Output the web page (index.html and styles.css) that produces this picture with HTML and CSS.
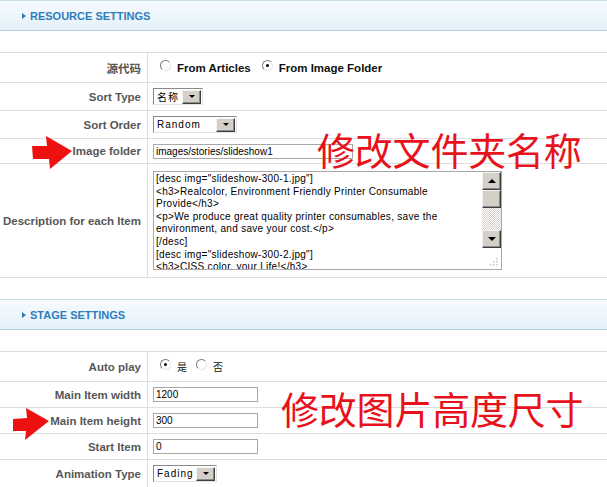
FILE: index.html
```html
<!DOCTYPE html>
<html lang="en">
<head>
<meta charset="utf-8">
<title>Settings</title>
<link rel="stylesheet" href="styles.css">
</head>
<body>
<div class="page">
  <div class="section-head"><span class="tri"></span>RESOURCE SETTINGS</div>
  <div class="form">
    <div class="row h30">
      <div class="label cjk">源代码</div>
      <div class="field">
        <span class="opt"><span class="radio"></span>From Articles</span>
        <span class="opt"><span class="radio on"></span>From Image Folder</span>
      </div>
    </div>
    <div class="row h28">
      <div class="label">Sort Type</div>
      <div class="field">
        <div class="select w50"><span class="sel-text cjk-s">名称</span><span class="sel-btn"></span></div>
      </div>
    </div>
    <div class="row h28">
      <div class="label">Sort Order</div>
      <div class="field">
        <div class="select w84"><span class="sel-text">Random</span><span class="sel-btn"></span></div>
      </div>
    </div>
    <div class="row h25">
      <div class="label">Image folder</div>
      <div class="field"><div class="inp w200">images/stories/slideshow1</div></div>
    </div>
    <div class="row h114">
      <div class="label">Description for each Item</div>
      <div class="field">
        <div class="textarea">
          <div class="ta-text">[desc img="slideshow-300-1.jpg"]
&lt;h3&gt;Realcolor, Environment Friendly Printer Consumable
Provide&lt;/h3&gt;
&lt;p&gt;We produce great quality printer consumables, save the
environment, and save your cost.&lt;/p&gt;
[/desc]
[desc img="slideshow-300-2.jpg"]
&lt;h3&gt;CISS color, your Life!&lt;/h3&gt;</div>
          <div class="scrollbar">
            <span class="sb-btn up"></span>
            <span class="sb-thumb"></span>
            <span class="sb-track"></span>
            <span class="sb-btn down"></span>
            <span class="sb-grip">
              <svg width="10" height="10" viewBox="0 0 10 10"><g fill="#c8c8c8"><rect x="7" y="1" width="1.5" height="1.5"/><rect x="4" y="4" width="1.5" height="1.5"/><rect x="7" y="4" width="1.5" height="1.5"/><rect x="1" y="7" width="1.5" height="1.5"/><rect x="4" y="7" width="1.5" height="1.5"/><rect x="7" y="7" width="1.5" height="1.5"/></g></svg>
            </span>
          </div>
        </div>
      </div>
    </div>
  </div>

  <div class="section-head"><span class="tri"></span>STAGE SETTINGS</div>
  <div class="form">
    <div class="row h30">
      <div class="label">Auto play</div>
      <div class="field">
        <span class="opt small"><span class="radio on"></span><span class="cjk-s">是</span></span>
        <span class="opt small"><span class="radio"></span><span class="cjk-s">否</span></span>
      </div>
    </div>
    <div class="row h26">
      <div class="label">Main Item width</div>
      <div class="field"><div class="inp w105">1200</div></div>
    </div>
    <div class="row h26">
      <div class="label">Main Item height</div>
      <div class="field"><div class="inp w105">300</div></div>
    </div>
    <div class="row h26">
      <div class="label">Start Item</div>
      <div class="field"><div class="inp w105">0</div></div>
    </div>
    <div class="row h28">
      <div class="label">Animation Type</div>
      <div class="field">
        <div class="select w64"><span class="sel-text">Fading</span><span class="sel-btn"></span></div>
      </div>
    </div>
  </div>

  <div class="note note-a">修改文件夹名称</div>
  <div class="note note-b">修改图片高度尺寸</div>
  <svg class="arrow arrow-a" width="80" height="40" viewBox="30 134 45 36"><polygon fill="#ee1111" points="32,146 47,146 46,136 72,151 50,169 49,159 33,159"/></svg>
  <svg class="arrow arrow-b" width="60" height="40" viewBox="10 406 42 36"><polygon fill="#ee1111" points="13,419 27,418 26,408 49,421 25,440 26,431 13,431"/></svg>
</div>
</body>
</html>
```

FILE: styles.css
```css
html, body {
  margin: 0;
  padding: 0;
  background: #ffffff;
}

.page {
  position: relative;
  width: 607px;
  height: 487px;
  overflow: hidden;
  font-family: "Liberation Sans", Arial, sans-serif;
}

.section-head {
  height: 29px;
  border-top: 1px solid #c9dde7;
  border-bottom: 1px solid #b3cfdd;
  background: linear-gradient(to bottom, #f7fbfe 0%, #eef7fc 45%, #e3f1f9 100%);
  display: flex;
  align-items: center;
  padding-left: 22px;
  font-size: 11px;
  font-weight: bold;
  color: #2f7cbd;
  margin-bottom: 21px;
}

.tri {
  width: 0;
  height: 0;
  border-left: 4px solid #2f7cbd;
  border-top: 3.5px solid transparent;
  border-bottom: 3.5px solid transparent;
  margin-right: 4px;
}

.form {
  border-top: 1px solid #dedede;
  margin-bottom: 21px;
}

.row {
  display: grid;
  grid-template-columns: 148px 1fr;
  border-bottom: 1px solid #dedede;
  box-sizing: border-box;
}

.h30 { height: 30px; }
.h28 { height: 28px; }
.h26 { height: 26px; }
.h25 { height: 25px; }
.h114 { height: 114px; }

.label {
  box-sizing: border-box;
  border-right: 1px solid #dedede;
  padding-right: 6px;
  display: flex;
  align-items: center;
  justify-content: flex-end;
  font-size: 11.5px;
  font-weight: bold;
  color: #575757;
  white-space: nowrap;
}

.label.cjk {
  font-family: "Noto Sans CJK SC", sans-serif;
  font-size: 11.5px;
  color: #555;
}

.cjk-s {
  font-family: "Noto Sans CJK SC", sans-serif;
}

.field {
  padding-left: 5px;
  display: flex;
  align-items: center;
}

.opt {
  display: flex;
  align-items: center;
  font-size: 11.5px;
  font-weight: bold;
  color: #111;
  margin-left: 7px;
  margin-right: 4px;
}

.opt.small {
  font-size: 10px;
  font-weight: normal;
  margin-right: 2px;
}

.radio {
  box-sizing: border-box;
  width: 11px;
  height: 11px;
  border-radius: 50%;
  border: 1px solid;
  border-color: #7a7a7a #e6e6e6 #e6e6e6 #7a7a7a;
  background: #fff;
  margin-right: 6px;
  margin-top: -4px;
  display: flex;
  align-items: center;
  justify-content: center;
}

.radio.on::after {
  content: "";
  width: 3px;
  height: 3px;
  border-radius: 50%;
  background: #000;
}

.select {
  box-sizing: border-box;
  height: 17px;
  border: 1px solid;
  border-color: #8a8a8a #e2e2e2 #e2e2e2 #8a8a8a;
  background: #fff;
  display: flex;
  align-items: center;
}

.w50 { width: 50px; }
.w84 { width: 84px; }
.w64 { width: 64px; }

.sel-text {
  flex: 1;
  padding-left: 3px;
  font-size: 10px;
  letter-spacing: 1px;
  color: #000;
  white-space: nowrap;
}

.sel-btn {
  box-sizing: border-box;
  width: 19px;
  height: 14px;
  margin-right: 1px;
  background: #d4d0c8;
  border: 1px solid;
  border-color: #f4f4f4 #404040 #404040 #f4f4f4;
  box-shadow: inset -1px -1px 0 #8a8a8a;
  display: flex;
  align-items: center;
  justify-content: center;
}

.sel-btn::before {
  content: "";
  border-top: 3px solid #000;
  border-left: 3px solid transparent;
  border-right: 3px solid transparent;
}

.inp {
  box-sizing: border-box;
  height: 15px;
  border: 1px solid #a8a8a8;
  background: #fff;
  font-size: 10px;
  line-height: 13px;
  padding-left: 2px;
  color: #000;
  white-space: nowrap;
  overflow: hidden;
}

.w105 { width: 105px; }
.w200 { width: 200px; }

.textarea {
  box-sizing: border-box;
  width: 349px;
  height: 99px;
  border: 1px solid #a8a8a8;
  background: #fff;
  display: flex;
}

.ta-text {
  flex: 1;
  overflow: hidden;
  white-space: pre;
  font-size: 10px;
  line-height: 12.6px;
  letter-spacing: 0.3px;
  padding: 1px 0 0 2px;
  color: #000;
}

.scrollbar {
  width: 19px;
  display: flex;
  flex-direction: column;
}

.sb-btn, .sb-thumb {
  box-sizing: border-box;
  height: 18px;
  background: #d4d0c8;
  border: 1px solid;
  border-color: #f4f4f4 #404040 #404040 #f4f4f4;
  box-shadow: inset -1px -1px 0 #8a8a8a;
  display: flex;
  align-items: center;
  justify-content: center;
}

.sb-btn.up::before {
  content: "";
  border-bottom: 4px solid #000;
  border-left: 4px solid transparent;
  border-right: 4px solid transparent;
}

.sb-btn.down::before {
  content: "";
  border-top: 4px solid #000;
  border-left: 4px solid transparent;
  border-right: 4px solid transparent;
}

.sb-track {
  height: 22px;
  background: repeating-conic-gradient(#d4d0c8 0 25%, #ffffff 0 50%) 0 0 / 2px 2px;
}

.sb-grip {
  flex: 1;
  display: flex;
  align-items: flex-end;
  justify-content: flex-end;
  padding: 0 2px 2px 0;
}

.note {
  position: absolute;
  font-family: "Noto Sans CJK SC", sans-serif;
  font-size: 38px;
  line-height: 38px;
  color: #e8121c;
  white-space: nowrap;
  letter-spacing: -0.2px;
}

.note-a { left: 317px; top: 130px; }
.note-b { left: 281px; top: 389px; }

.arrow {
  position: absolute;
}

.arrow-a { left: 30px; top: 134px; width: 45px; height: 36px; }
.arrow-b { left: 10px; top: 406px; width: 42px; height: 36px; }
```
